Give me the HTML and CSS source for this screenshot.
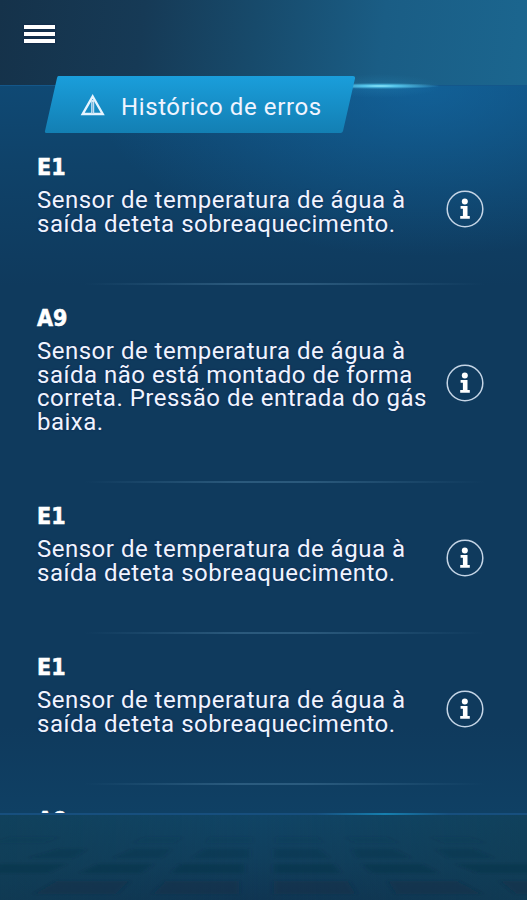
FILE: index.html
```
<!DOCTYPE html>
<html lang="pt">
<head>
    <meta charset="UTF-8">
    <meta name="viewport" content="width=device-width, initial-scale=1.0">
    <title>Histórico de erros</title>
    <link rel="stylesheet" href="styles.css">
</head>
<body>
<svg class="sprite" width="0" height="0">
    <symbol id="icon-info" viewBox="0 0 38 38">
        <circle cx="19" cy="19" r="17.8" fill="none" stroke="#c5d5e6" stroke-width="1.5"/>
        <circle cx="18.800" cy="11.600" r="3" fill="#fff"/>
        <path d="M14.600 17.400h4.500M14.200 27.400h9.600" fill="none" stroke="#fff" stroke-width="2.900"/>
        <path d="M19.2 16v11" stroke="#fff" stroke-width="4.600"/>
    </symbol>
</svg>

<header class="header">
    <button class="menu-btn" aria-label="Menu">
        <span></span>
        <span></span>
        <span></span>
    </button>
    <div class="flare"></div>
    <div class="tab">
        <svg class="tab-shape" width="312" height="60" viewBox="0 0 312 60">
            <defs>
                <linearGradient id="tab-fill" x1="0" y1="0" x2="0" y2="1">
                    <stop offset="0" stop-color="#1a9edb"/>
                    <stop offset="1" stop-color="#137fb3"/>
                </linearGradient>
            </defs>
            <path d="M14.5 1H309q2.500 0 2 2.500L299 56q-.5 2-2.500 2H2.500Q.5 58 1 56L13 3q.4-2 1.500-2z" fill="url(#tab-fill)"/>
        </svg>
        <svg class="tab-icon" width="26" height="24" viewBox="0 0 26 24">
            <path d="M12.700 3.500L22.700 21H2.700z" fill="none" stroke="#e6f4ff" stroke-width="2.400"/>
            <path d="M12.700 7v14" stroke="#d3eaf8" stroke-width="3"/>
            <path d="M12.700 9v11" stroke="#5c9cc9" stroke-width=".8"/>
        </svg>
        <h1>Histórico de erros</h1>
    </div>
</header>

<main class="errors">
    <article class="error">
        <div class="error-text">
            <h2>E1</h2>
            <p>Sensor de temperatura de água à<br>saída deteta sobreaquecimento.</p>
        </div>
        <svg class="info" width="38" height="38"><use href="#icon-info"/></svg>
    </article>
    <article class="error">
        <div class="error-text">
            <h2>A9</h2>
            <p>Sensor de temperatura de água à<br>saída não está montado de forma<br>correta. Pressão de entrada do gás<br>baixa.</p>
        </div>
        <svg class="info" width="38" height="38"><use href="#icon-info"/></svg>
    </article>
    <article class="error">
        <div class="error-text">
            <h2>E1</h2>
            <p>Sensor de temperatura de água à<br>saída deteta sobreaquecimento.</p>
        </div>
        <svg class="info" width="38" height="38"><use href="#icon-info"/></svg>
    </article>
    <article class="error">
        <div class="error-text">
            <h2>E1</h2>
            <p>Sensor de temperatura de água à<br>saída deteta sobreaquecimento.</p>
        </div>
        <svg class="info" width="38" height="38"><use href="#icon-info"/></svg>
    </article>
    <article class="error">
        <div class="error-text">
            <h2>A9</h2>
        </div>
    </article>
</main>

<footer class="footer">
    <svg class="floor" width="527" height="85" viewBox="0 0 527 85">
        <defs>
            <filter id="soft"><feGaussianBlur stdDeviation="2.500 1"/></filter>
        </defs>
        <g fill="#0f2c44" filter="url(#soft)">
            <g opacity=".12">
                <path d="M10 22h50l-16 6h-52zM145 22h38l-9 6h-42zM210 22h42v6h-46zM276 22h42l5 6h-47zM345 22h42l12 6h-44zM430 22h40l16 6h-42z"/>
            </g>
            <g opacity=".28">
                <path d="M59 34h28l-14 9H28zM133 34h38l-10 9h-48zM205 34h44v9h-57zM274 34h45l10 9h-55zM352 34h42l17 9h-54zM436 34h38l20 9h-46z"/>
            </g>
            <g opacity=".4">
                <path d="M0 49h66l-18 9H-10zM98 49h55l-12 9H80zM180 49h64v9h-72zM274 49h60l6 9h-66zM362 49h60l16 9h-66zM456 49h80v9h-58z"/>
            </g>
            <g opacity=".45">
                <path d="M56 66h74l-14 13H34zM165 66h74v13h-86zM274 66h74l8 13h-82zM388 66h70l24 13h-86zM500 66h50v13h-34z"/>
            </g>
        </g>
    </svg>
</footer>
</body>
</html>
```
FILE: styles.css
```
* {
    box-sizing: border-box;
}

body {
    font-family: Roboto, "Liberation Sans", sans-serif;
    display: flex;
    flex-direction: column;
    height: 900px;
    margin: 0;
    overflow: hidden;
    color: #f0f4ff;
    background-color: #0f3a5d;
}

.sprite {
    position: absolute;
}

.header {
    position: relative;
    flex: none;
    height: 85px;
    padding: 24px 24px 0;
    background: linear-gradient(97deg, #15324a 0%, #163a56 27%, #174a6b 48%, #1a5d85 72%, #1b668f 100%);
}

.menu-btn {
    display: flex;
    flex-direction: column;
    gap: 3px;
    width: 31px;
    padding: 1px 0 0;
    border: none;
    background: none;
    cursor: pointer;
}

.menu-btn span {
    height: 4px;
    background: #fff;
    box-shadow: 0 0 2px #0a1540;
}

/* light streak on the lower edge of the header */
.flare {
    position: absolute;
    left: 270px;
    top: 73px;
    width: 220px;
    height: 26px;
    background:
        radial-gradient(ellipse 60px 3px at 50% 50%, #a4f2ff 0%, #54c4ea 30%, rgba(40, 150, 210, 0) 100%),
        radial-gradient(ellipse 60px 12px at 50% 50%, rgba(45, 150, 200, 0.25), rgba(45, 150, 200, 0));
}

.tab {
    position: absolute;
    left: 44px;
    top: 75px;
    width: 312px;
    height: 60px;
    display: flex;
    align-items: center;
    padding-left: 36px;
}

.tab-shape {
    position: absolute;
    left: 0;
    top: 0;
}

.tab-icon {
    position: relative;
    margin-top: -1px;
}

.tab h1 {
    position: relative;
    margin: 3px 0 0 15px;
    font-size: 24px;
    font-weight: 400;
    line-height: 30px;
    letter-spacing: 0.6px;
    white-space: nowrap;
}

.errors {
    flex: 1;
    min-height: 0;
    overflow: hidden;
    padding-top: 48px;
    border-top: 1px solid #14578a;
    background:
        radial-gradient(ellipse 330px 170px at 80% 0, rgba(20, 112, 175, 0.6), rgba(20, 112, 175, 0)),
        linear-gradient(#0f4974 0, #0f4269 80px, #0f3a5d 200px, #0f3a5d 640px, #0f4064 100%);
}

.error {
    display: flex;
    align-items: center;
    justify-content: space-between;
    padding: 0 43px 0 37px;
    background: linear-gradient(90deg, rgba(70, 120, 155, 0) 16%, rgba(70, 120, 155, 0.5) 45%, rgba(70, 120, 155, 0.5) 58%, rgba(70, 120, 155, 0) 92%) bottom / 100% 2px no-repeat;
}

.error-text {
    padding: 22px 0 48px;
}

.error:last-child .error-text {
    padding-top: 24px;
}

.error h2 {
    margin: 0 0 10px;
    font-family: "DejaVu Sans Condensed", "DejaVu Sans", sans-serif;
    font-stretch: condensed;
    font-size: 23px;
    font-weight: 700;
    line-height: 23px;
    color: #fff;
    -webkit-text-stroke: 0.5px #fff;
}

.error p {
    margin: 0;
    padding-bottom: 1px;
    font-size: 24px;
    line-height: 23.5px;
    letter-spacing: 0.5px;
    white-space: nowrap;
    text-shadow: 0 0 2px #0b2150;
}

.info {
    flex: none;
    margin-top: -2px;
}

.footer {
    flex: none;
    height: 87px;
    border-top: 2px solid;
    border-image: linear-gradient(90deg, #174f7e 0%, #174f7e 60%, #1680b0 73%, #174f7e 85%, #174f7e 100%) 1;
    background: linear-gradient(90deg, rgba(16, 62, 84, 0.5), rgba(17, 70, 102, 0) 50%, rgba(16, 62, 84, 0.5)), linear-gradient(#104465, #103f5d 50%, #0f3552);
}

.floor {
    display: block;
}
```
